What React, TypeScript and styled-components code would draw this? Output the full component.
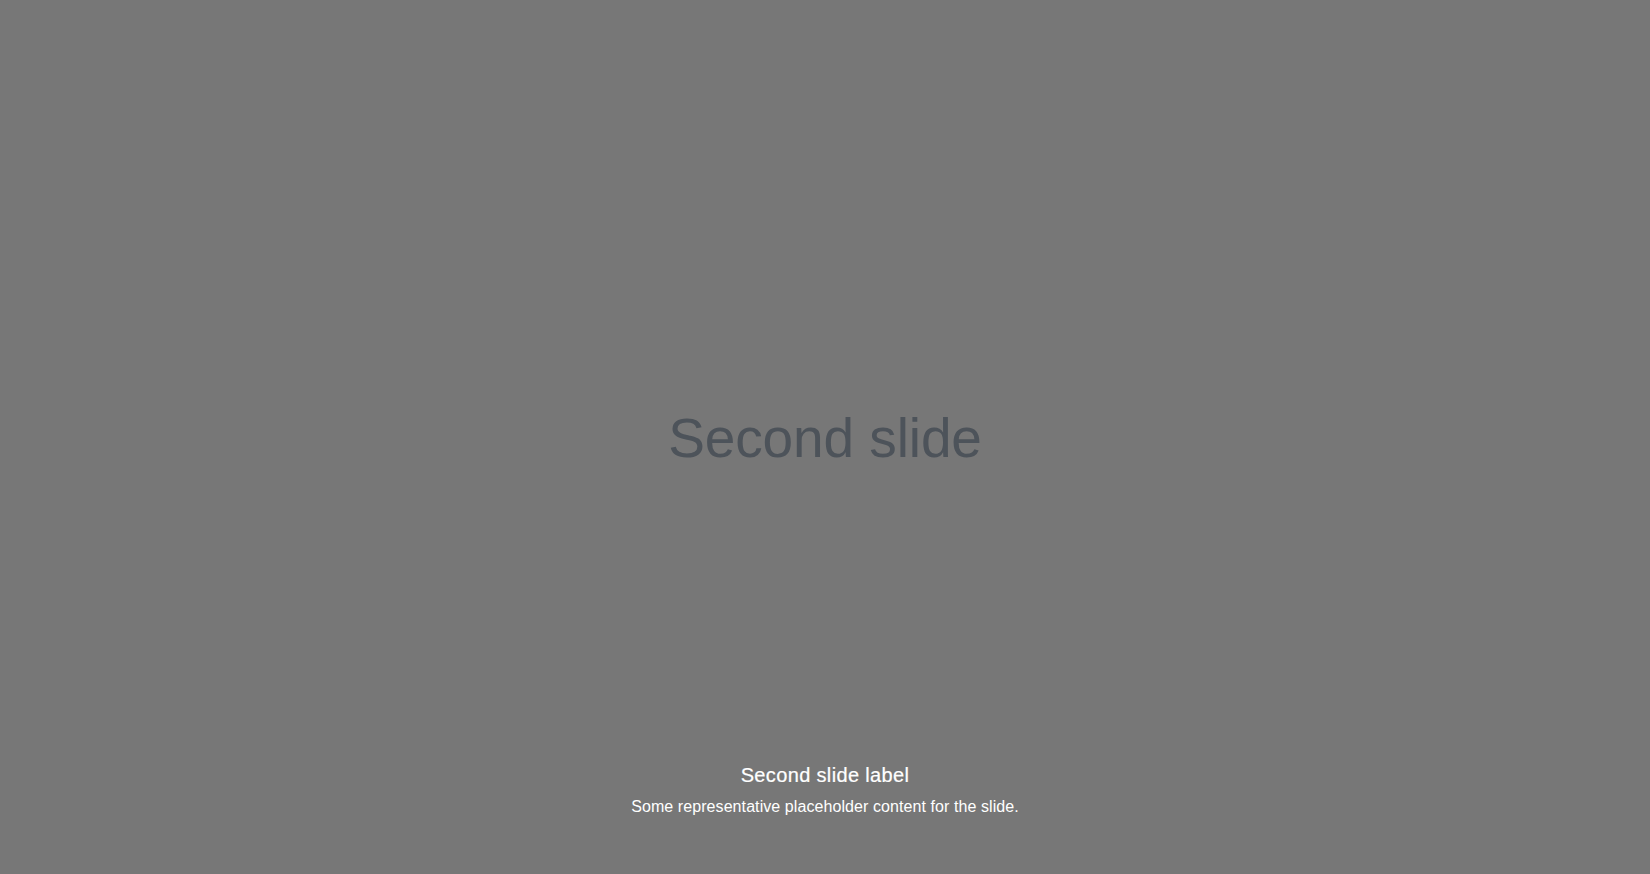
import React from "react";
import styled, { createGlobalStyle } from "styled-components";

const Global = createGlobalStyle`
  html, body { margin: 0; padding: 0; }
  body { font-family: "Liberation Sans", Arial, Helvetica, sans-serif; background: #777; }
`;

const Carousel = styled.div`
  position: relative;
  width: 100%;
  height: 874px;
  overflow: hidden;
`;

const Slide = styled.div`
  width: 100%;
  height: 100%;
  background: #777777;
  display: flex;
  align-items: center;
  justify-content: center;
`;

const PlaceholderText = styled.div`
  font-size: 55px;
  line-height: 1;
  color: #4d535a;
  margin-top: 3px;
  letter-spacing: -0.1px;
`;

const Caption = styled.div`
  position: absolute;
  left: 15%;
  right: 15%;
  bottom: 19px;
  padding: 20px 0;
  color: #fff;
  text-align: center;
`;

const Label = styled.h5`
  margin: 0 0 8px;
  font-size: 20px;
  font-weight: 500;
  line-height: 1.2;
  letter-spacing: 0.35px;
  -webkit-text-stroke: 0.2px #fff;
`;

const Text = styled.p`
  margin: 0 0 16px;
  font-size: 16px;
  line-height: 1.5;
  letter-spacing: 0.08px;
`;

export default function App() {
  return (
    <>
      <Global />
      <Carousel>
        <Slide>
          <PlaceholderText>Second slide</PlaceholderText>
        </Slide>
        <Caption>
          <Label>Second slide label</Label>
          <Text>Some representative placeholder content for the slide.</Text>
        </Caption>
      </Carousel>
    </>
  );
}
